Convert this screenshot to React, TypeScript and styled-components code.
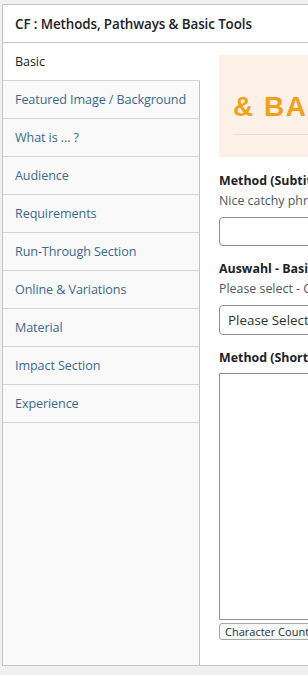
import React from 'react';
import styled, { createGlobalStyle } from 'styled-components';

const tabs = [
  'Basic',
  'Featured Image / Background',
  'What is ... ?',
  'Audience',
  'Requirements',
  'Run-Through Section',
  'Online & Variations',
  'Material',
  'Impact Section',
  'Experience',
];

const App: React.FC = () => {
  return (
    <Page>
      <GlobalStyle />
      <Postbox>
        <Header>
          <Title>CF : Methods, Pathways &amp; Basic Tools</Title>
        </Header>
        <Body>
          <TabList>
            {tabs.map((t, i) => (
              <Tab key={t} active={i === 0}>
                {t}
              </Tab>
            ))}
          </TabList>
          <Content>
            <Banner>
              <BannerHeading>&amp; BASIC TOOLS</BannerHeading>
            </Banner>

            <Label first>Method (Subtitle)</Label>
            <Description>Nice catchy phrase to describe the method in one line</Description>
            <TextInput type="text" />

            <Label>Auswahl - Basic Tool / Method / Pathway</Label>
            <Description>Please select - Choose the right category</Description>
            <Select>
              <span>Please Select</span>
            </Select>

            <Label>Method (Short Description)</Label>
            <TextArea />
            <CharCount>Character Count: 0</CharCount>
          </Content>
        </Body>
      </Postbox>
    </Page>
  );
};

export default App;

const GlobalStyle = createGlobalStyle`
  html, body {
    margin: 0;
    background: #f0f0f1;
    overflow: hidden;
  }
  body {
    font-family: "Open Sans", "Noto Sans", sans-serif;
  }
`;

const Page = styled.div`
  padding: 4px 0 0 2px;
  width: 800px;
  height: 675px;
  box-sizing: border-box;
`;

const Postbox = styled.div`
  border: 1px solid #c3c4c7;
  background: #fff;
  height: 662px;
  box-sizing: border-box;
  display: flex;
  flex-direction: column;
`;

const Header = styled.div`
  height: 38px;
  flex: none;
  border-bottom: 1px solid #c3c4c7;
  display: flex;
  align-items: center;
  padding-left: 12px;
  box-sizing: border-box;
`;

const Title = styled.h2`
  margin: 0;
  font-size: 13.4px;
  font-weight: 600;
  color: #1d2327;
  letter-spacing: -0.1px;
`;

const Body = styled.div`
  flex: 1;
  display: flex;
  min-height: 0;
`;

const TabList = styled.ul`
  list-style: none;
  margin: 0;
  padding: 0;
  width: 196px;
  flex: none;
  background: #f9f9f9;
  border-right: 1px solid #c3c4c7;
`;

const Tab = styled.li<{ active?: boolean }>`
  height: 38px;
  box-sizing: border-box;
  display: flex;
  align-items: center;
  padding-left: 12px;
  font-size: 12.6px;
  letter-spacing: -0.1px;
  border-bottom: 1px solid #d2d4d7;
  color: ${p => (p.active ? '#1d2327' : '#3b6a94')};
  background: ${p => (p.active ? '#fff' : 'transparent')};
  margin-right: ${p => (p.active ? '-1px' : '0')};
  white-space: nowrap;
`;

const Content = styled.div`
  flex: 1;
  padding: 12px 0 0 19px;
  display: flex;
  flex-direction: column;
`;

const Banner = styled.div`
  height: 102px;
  flex: none;
  background: #fcf0e7;
  padding-left: 14px;
  display: flex;
  flex-direction: column;
  justify-content: center;
`;

const BannerHeading = styled.h1`
  margin: 10px 0 0;
  padding-bottom: 8px;
  font-family: "Liberation Sans", Arial, sans-serif;
  font-size: 28px;
  font-weight: 700;
  letter-spacing: 1.5px;
  color: #f2a21a;
  line-height: 38px;
  border-bottom: 1px solid #eddcd0;
  white-space: nowrap;
`;

const Label = styled.div<{ first?: boolean }>`
  margin-top: ${p => (p.first ? '14px' : '13px')};
  font-size: 12.4px;
  font-weight: 700;
  line-height: 20px;
  color: #1d2327;
  white-space: nowrap;
`;

const Description = styled.div`
  font-size: 12.4px;
  line-height: 20px;
  color: #50575e;
  white-space: nowrap;
`;

const TextInput = styled.input`
  margin: 6px 0 0;
  height: 29px;
  box-sizing: border-box;
  border: 1px solid #8c8f94;
  border-radius: 4px;
  background: #fff;
  width: 100%;
`;

const Select = styled.div`
  margin-top: 6px;
  height: 30px;
  box-sizing: border-box;
  border: 1px solid #8c8f94;
  border-radius: 4px;
  display: flex;
  align-items: center;
  padding-left: 8px;
  font-size: 13.4px;
  color: #2c3338;
`;

const TextArea = styled.div`
  margin-top: 5px;
  height: 247px;
  box-sizing: border-box;
  border: 1px solid #8c8f94;
  border-radius: 1px;
  background: #fff;
`;

const CharCount = styled.div`
  margin-top: 3px;
  align-self: flex-start;
  height: 17px;
  box-sizing: border-box;
  border: 1px solid #a7aaad;
  border-radius: 3px;
  background: #f6f7f7;
  padding: 0 5px;
  font-size: 11px;
  line-height: 15px;
  color: #2c3338;
  white-space: nowrap;
`;
